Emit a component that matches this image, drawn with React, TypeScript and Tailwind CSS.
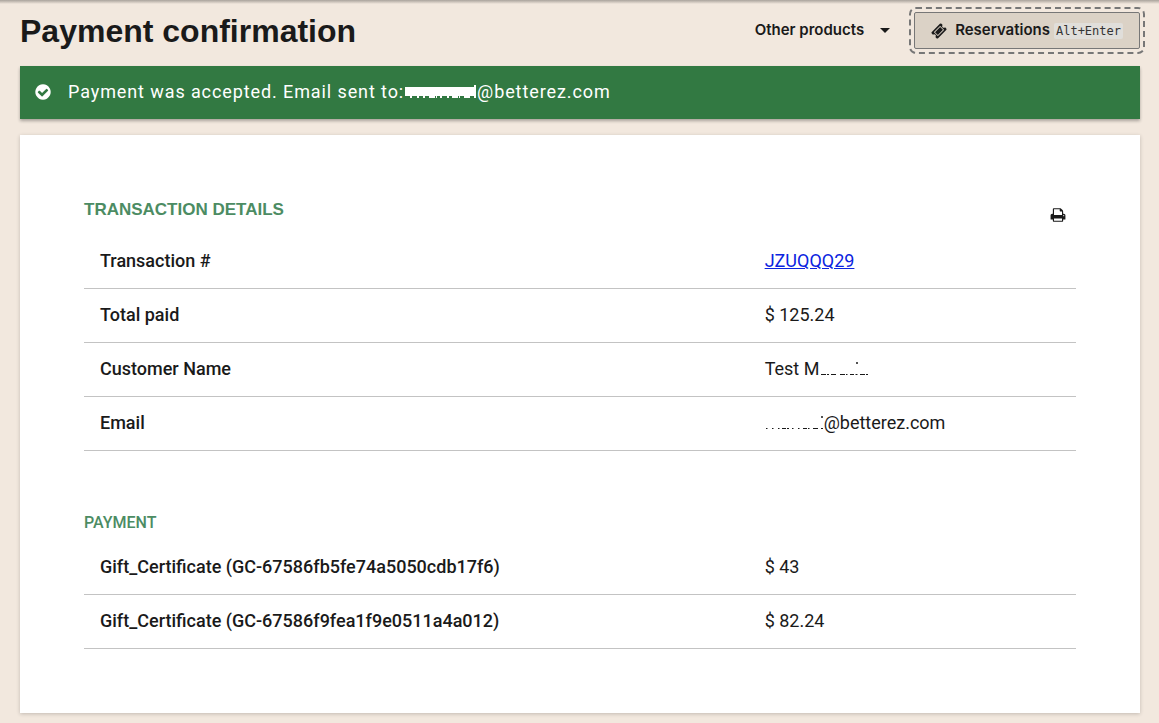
import React from "react";

const DETAILS = [
  { label: "Transaction #", value: "JZUQQQ29", href: "#JZUQQQ29" },
  { label: "Total paid", value: "$ 125.24" },
  { label: "Customer Name", value: <MaskedName /> },
  { label: "Email", value: <MaskedEmail /> },
];

const PAYMENTS = [
  { label: "Gift_Certificate (GC-67586fb5fe74a5050cdb17f6)", value: "$ 43" },
  { label: "Gift_Certificate (GC-67586f9fea1f9e0511a4a012)", value: "$ 82.24" },
];

function Icon({ path, className }: { path: string; className: string }) {
  return (
    <svg viewBox="0 0 1792 1792" fill="currentColor" className={className} aria-hidden="true">
      <path d={path} />
    </svg>
  );
}

const CHECK =
  "M1412 734q0-28-18-46l-91-90q-19-19-45-19t-45 19l-408 407-226-226q-19-19-45-19t-45 19l-91 90q-18 18-18 46 0 27 18 45l362 362q19 19 45 19 27 0 46-19l543-543q18-18 18-45zm252 162q0 209-103 385.500t-279.500 279.500-385.500 103-385.500-103-279.500-279.500-103-385.500 103-385.500 279.500-279.500 385.500-103 385.500 103 279.500 279.500 103 385.500z";
const TICKET =
  "M1024 452l316 316-572 572-316-316zm-211 979l618-618q19-19 19-45t-19-45l-362-362q-18-18-45-18t-45 18l-618 618q-19 19-19 45t19 45l362 362q18 18 45 18t45-18zm889-637l-907 908q-37 37-90.500 37t-90.500-37l-126-126q56-56 56-136t-56-136-136-56-136 56l-125-126q-37-37-37-90.500t37-90.500l907-906q37-37 90.500-37t90.500 37l125 125q-56 56-56 136t56 136 136 56 136-56l126 125q37 37 37 90.500t-37 90.500z";
const PRINT =
  "M448 1536h896v-256h-896v256zm0-640h896v-384h-160q-40 0-68-28t-28-68v-160h-640v640zm1152 64q0-26-19-45t-45-19-45 19-19 45 19 45 45 19 45-19 19-45zm128 0v416q0 13-9.500 22.500t-22.500 9.500h-224v160q0 40-28 68t-68 28h-960q-40 0-68-28t-28-68v-160h-224q-13 0-22.500-9.500t-9.500-22.500v-416q0-79 56.500-135.500t135.500-56.500h64v-544q0-40 28-68t68-28h672q40 0 88 20t76 48l152 152q28 28 48 76t20 88v256h64q79 0 135.500 56.500t56.500 135.500z";

// The hidden part of a value only leaves a few specks on the baseline
function MaskedName() {
  return (
    <span className="flex items-center">
      Test M
      <svg viewBox="0 0 50 20" className="h-5 w-[50px]" fill="none" stroke="currentColor" aria-hidden="true">
        <path d="M2 15.500h5M8 15.500h2M12 15.500h5M21 15.500h5M27 15.500h1.500M31 15.500h4M36.500 15.500h2M41 15.500h5M47 15.500h2" />
        <path d="M38 3v2" strokeWidth="1.500" />
      </svg>
    </span>
  );
}

function MaskedEmail() {
  return (
    <span className="flex items-center">
      <svg viewBox="0 0 59 20" className="h-5 w-[59px]" fill="none" stroke="currentColor" aria-hidden="true">
        <path d="M1 15.500h1.500M7 15.500h1.500M13 15.500h1.500M17 15.500h4M22 15.500h2M27 15.500h1.500M33 15.500h1.500M38 15.500h4M43 15.500h1.500M48 15.500h5M56 15.500h2" />
        <path d="M57 3v2" strokeWidth="1.500" />
      </svg>
      @betterez.com
    </span>
  );
}

type Row = { label: string; value: React.ReactNode; href?: string };

function DetailTable({ label, rows }: { label: string; rows: Row[] }) {
  return (
    <table aria-label={label} className="w-full table-fixed border-collapse text-lg leading-6">
      <tbody>
        {rows.map((row) => (
          <tr key={row.label} className="border-b border-[#c3c3c3]">
            <th scope="row" className="w-[67%] px-4 pt-[14px] pb-[15px] text-left font-medium">
              {row.label}
            </th>
            <td className="px-4 pt-[14px] pb-[15px]">
              {row.href ? (
                <a href={row.href} className="text-[#0b24e0] underline">
                  {row.value}
                </a>
              ) : (
                row.value
              )}
            </td>
          </tr>
        ))}
      </tbody>
    </table>
  );
}

export default function App() {
  return (
    <div className="min-h-screen bg-[#f2e8de] font-['Roboto',sans-serif] text-[#1a1a1a]">
      <div className="h-1 bg-linear-to-b from-[#aaa39c] to-[#f2e8de]" />
      <div className="pr-[19px] pb-[10px] pl-5">
        <header className="flex items-start justify-between pt-2 font-['Inter','Liberation_Sans',sans-serif]">
          <h1 className="font-['Liberation_Sans',sans-serif] text-[32px] leading-[38px] font-bold">
            Payment confirmation
          </h1>
          <div className="flex items-start gap-6">
            <button type="button" className="flex h-9 items-center gap-4 text-[15px] font-semibold">
              Other products
              <svg viewBox="0 0 10 5" className="h-[5px] w-[10px]" fill="currentColor" aria-hidden="true">
                <path d="M0 0h10L5 5z" />
              </svg>
            </button>
            <button
              type="button"
              className="flex h-[37px] items-center rounded-xs border border-[#777] bg-[#dbd2c6] px-4 text-[15px] font-semibold outline-2 outline-offset-3 outline-dashed outline-[#777]"
            >
              <Icon path={TICKET} className="mr-2 h-4 w-4" />
              Reservations
              <kbd className="ml-1 rounded-xs bg-[#e0deda] px-[2px] font-['DejaVu_Sans_Mono',monospace] text-xs leading-4 font-normal text-[#333]">
                Alt+Enter
              </kbd>
            </button>
          </div>
        </header>

        <div
          role="status"
          className="mt-4 flex items-center bg-[#327942] px-[14px] pt-[13px] pb-[15px] text-lg leading-[25px] tracking-wider text-white shadow-[0_2px_3px_rgba(0,0,0,0.3)]"
        >
          <Icon path={CHECK} className="mr-4 h-[18px] w-[18px]" />
          <span>Payment was accepted. Email sent to:</span>
          <svg viewBox="0 0 73 20" className="h-5 w-[73px]" fill="currentColor" aria-hidden="true">
            <path d="M1 5h71v9H1z" />
            <path d="M6 14h2v2H6zM13 14h2v2h-2zM19 14h2v2h-2zM25 14h6v2h-6zM32 14h1v2h-1zM36 14h2v2h-2zM43 14h2v2h-2zM48 14h6v2h-6zM55 14h1v2h-1zM60 14h6v2h-6zM70 3h2v13h-2z" />
          </svg>
          <span>@betterez.com</span>
        </div>

        <main className="mt-4 bg-white px-16 pt-16 pb-16 shadow-[0_1px_4px_rgba(0,0,0,0.2)]">
          <div className="flex items-start justify-between">
            <h2 className="font-['Liberation_Sans',sans-serif] text-[17px] leading-[22px] font-bold text-[#4c8c63]">
              TRANSACTION DETAILS
            </h2>
            <button type="button" aria-label="Print" className="mt-2 mr-[10px] mb-1">
              <Icon path={PRINT} className="h-4 w-4" />
            </button>
          </div>
          <div className="mt-2">
            <DetailTable label="Transaction details" rows={DETAILS} />
          </div>
          <h2 className="mt-[62px] mb-2 text-base leading-5 font-medium text-[#4c8c63]">PAYMENT</h2>
          <DetailTable label="Payment" rows={PAYMENTS} />
        </main>
      </div>
    </div>
  );
}
